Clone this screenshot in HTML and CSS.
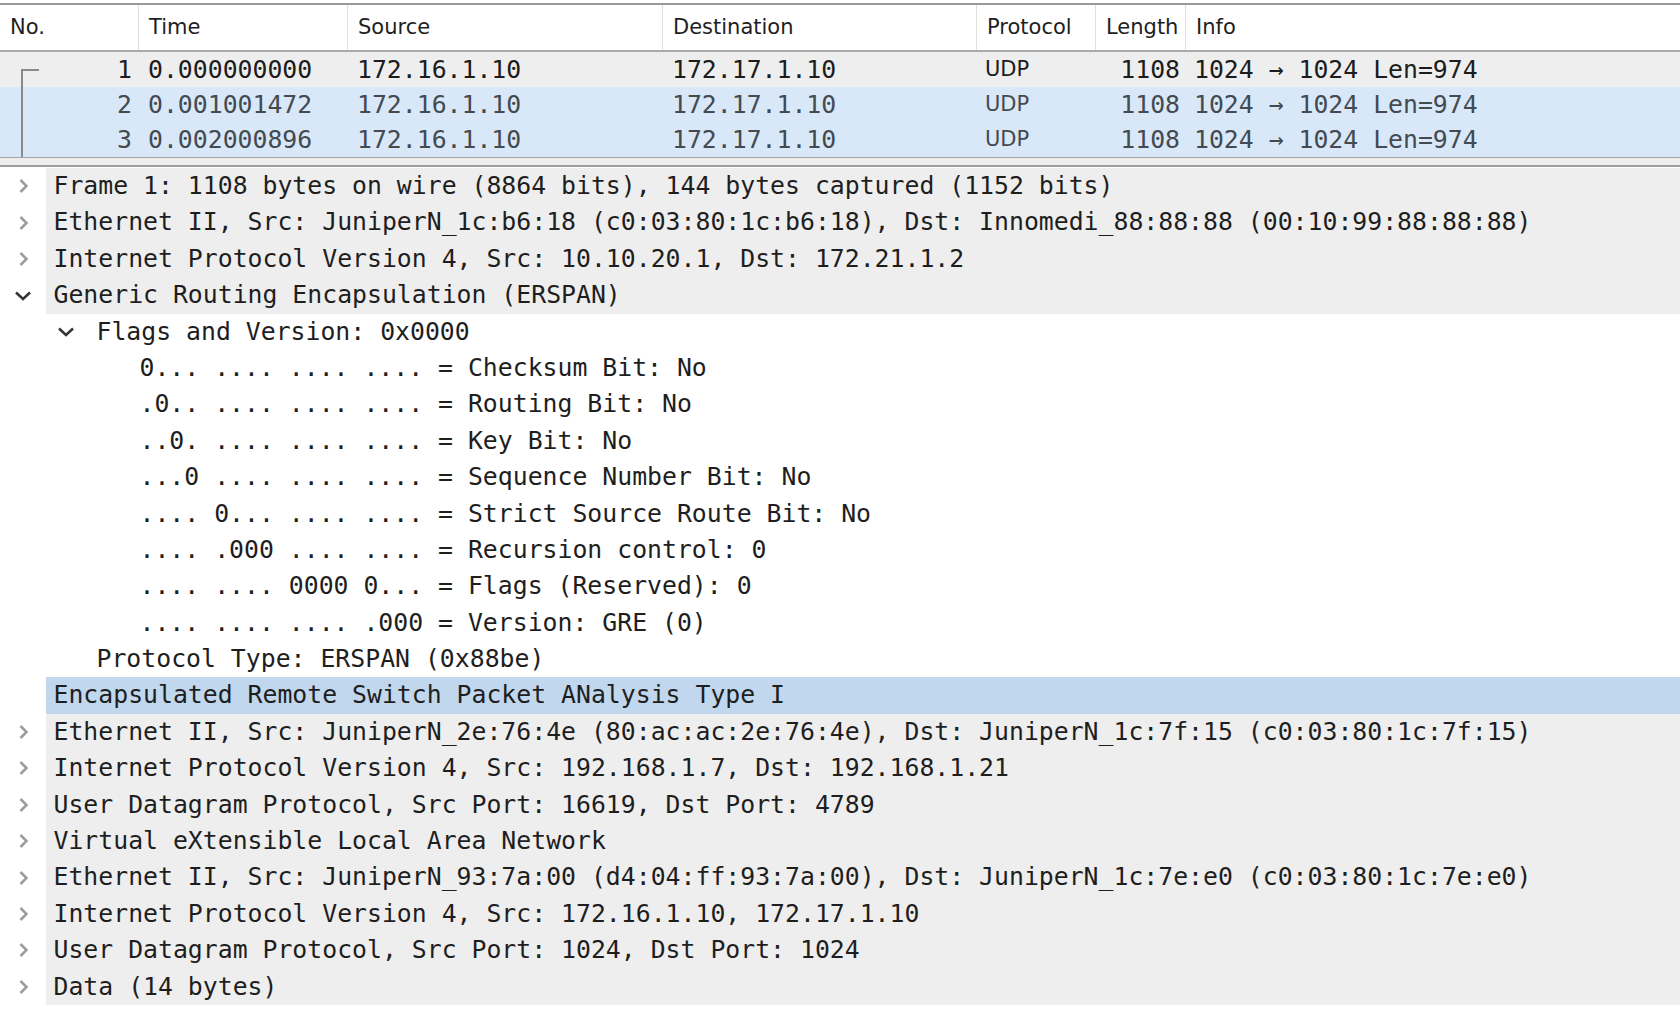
FILE: index.html
```html
<!DOCTYPE html>
<html>
<head>
<meta charset="utf-8">
<link rel="stylesheet" href="styles.css">
</head>
<body>
<div class="app">
  <div class="plist">
    <div class="phead">
      <div class="hc">No.</div>
      <div class="hc">Time</div>
      <div class="hc">Source</div>
      <div class="hc">Destination</div>
      <div class="hc">Protocol</div>
      <div class="hc">Length</div>
      <div class="hc last">Info</div>
    </div>
    <div class="prow first">
      <div class="pc num rel rel-start">1</div>
      <div class="pc mono">0.000000000</div>
      <div class="pc mono">172.16.1.10</div>
      <div class="pc mono">172.17.1.10</div>
      <div class="pc sans">UDP</div>
      <div class="pc mono len">1108</div>
      <div class="pc mono info">1024 → 1024 Len=974</div>
    </div>
    <div class="prow sel">
      <div class="pc num rel rel-mid">2</div>
      <div class="pc mono">0.001001472</div>
      <div class="pc mono">172.16.1.10</div>
      <div class="pc mono">172.17.1.10</div>
      <div class="pc sans">UDP</div>
      <div class="pc mono len">1108</div>
      <div class="pc mono info">1024 → 1024 Len=974</div>
    </div>
    <div class="prow sel">
      <div class="pc num rel rel-mid">3</div>
      <div class="pc mono">0.002000896</div>
      <div class="pc mono">172.16.1.10</div>
      <div class="pc mono">172.17.1.10</div>
      <div class="pc sans">UDP</div>
      <div class="pc mono len">1108</div>
      <div class="pc mono info">1024 → 1024 Len=974</div>
    </div>
  </div>

  <div class="splitter"></div>

  <div class="tree">
    <div class="node shaded"><span class="tw"><svg class="chev-r" width="11" height="16" viewBox="0 0 11 16"><polyline points="2.5,2 8.5,8 2.5,14"/></svg></span><span class="lbl">Frame 1: 1108 bytes on wire (8864 bits), 144 bytes captured (1152 bits)</span></div>
    <div class="node shaded"><span class="tw"><svg class="chev-r" width="11" height="16" viewBox="0 0 11 16"><polyline points="2.5,2 8.5,8 2.5,14"/></svg></span><span class="lbl">Ethernet II, Src: JuniperN_1c:b6:18 (c0:03:80:1c:b6:18), Dst: Innomedi_88:88:88 (00:10:99:88:88:88)</span></div>
    <div class="node shaded"><span class="tw"><svg class="chev-r" width="11" height="16" viewBox="0 0 11 16"><polyline points="2.5,2 8.5,8 2.5,14"/></svg></span><span class="lbl">Internet Protocol Version 4, Src: 10.10.20.1, Dst: 172.21.1.2</span></div>
    <div class="node shaded"><span class="tw"><svg class="chev-d" width="18" height="11" viewBox="0 0 18 11"><polyline points="2,2.5 9,9 16,2.5"/></svg></span><span class="lbl">Generic Routing Encapsulation (ERSPAN)</span></div>
    <div class="node lv1"><span class="tw"><svg class="chev-d" width="18" height="11" viewBox="0 0 18 11"><polyline points="2,2.5 9,9 16,2.5"/></svg></span><span class="lbl">Flags and Version: 0x0000</span></div>
    <div class="node lv2"><span class="tw"></span><span class="lbl">0... .... .... .... = Checksum Bit: No</span></div>
    <div class="node lv2"><span class="tw"></span><span class="lbl">.0.. .... .... .... = Routing Bit: No</span></div>
    <div class="node lv2"><span class="tw"></span><span class="lbl">..0. .... .... .... = Key Bit: No</span></div>
    <div class="node lv2"><span class="tw"></span><span class="lbl">...0 .... .... .... = Sequence Number Bit: No</span></div>
    <div class="node lv2"><span class="tw"></span><span class="lbl">.... 0... .... .... = Strict Source Route Bit: No</span></div>
    <div class="node lv2"><span class="tw"></span><span class="lbl">.... .000 .... .... = Recursion control: 0</span></div>
    <div class="node lv2"><span class="tw"></span><span class="lbl">.... .... 0000 0... = Flags (Reserved): 0</span></div>
    <div class="node lv2"><span class="tw"></span><span class="lbl">.... .... .... .000 = Version: GRE (0)</span></div>
    <div class="node lv1"><span class="tw"></span><span class="lbl">Protocol Type: ERSPAN (0x88be)</span></div>
    <div class="node picked"><span class="tw"></span><span class="lbl">Encapsulated Remote Switch Packet ANalysis Type I</span></div>
    <div class="node shaded"><span class="tw"><svg class="chev-r" width="11" height="16" viewBox="0 0 11 16"><polyline points="2.5,2 8.5,8 2.5,14"/></svg></span><span class="lbl">Ethernet II, Src: JuniperN_2e:76:4e (80:ac:ac:2e:76:4e), Dst: JuniperN_1c:7f:15 (c0:03:80:1c:7f:15)</span></div>
    <div class="node shaded"><span class="tw"><svg class="chev-r" width="11" height="16" viewBox="0 0 11 16"><polyline points="2.5,2 8.5,8 2.5,14"/></svg></span><span class="lbl">Internet Protocol Version 4, Src: 192.168.1.7, Dst: 192.168.1.21</span></div>
    <div class="node shaded"><span class="tw"><svg class="chev-r" width="11" height="16" viewBox="0 0 11 16"><polyline points="2.5,2 8.5,8 2.5,14"/></svg></span><span class="lbl">User Datagram Protocol, Src Port: 16619, Dst Port: 4789</span></div>
    <div class="node shaded"><span class="tw"><svg class="chev-r" width="11" height="16" viewBox="0 0 11 16"><polyline points="2.5,2 8.5,8 2.5,14"/></svg></span><span class="lbl">Virtual eXtensible Local Area Network</span></div>
    <div class="node shaded"><span class="tw"><svg class="chev-r" width="11" height="16" viewBox="0 0 11 16"><polyline points="2.5,2 8.5,8 2.5,14"/></svg></span><span class="lbl">Ethernet II, Src: JuniperN_93:7a:00 (d4:04:ff:93:7a:00), Dst: JuniperN_1c:7e:e0 (c0:03:80:1c:7e:e0)</span></div>
    <div class="node shaded"><span class="tw"><svg class="chev-r" width="11" height="16" viewBox="0 0 11 16"><polyline points="2.5,2 8.5,8 2.5,14"/></svg></span><span class="lbl">Internet Protocol Version 4, Src: 172.16.1.10, 172.17.1.10</span></div>
    <div class="node shaded"><span class="tw"><svg class="chev-r" width="11" height="16" viewBox="0 0 11 16"><polyline points="2.5,2 8.5,8 2.5,14"/></svg></span><span class="lbl">User Datagram Protocol, Src Port: 1024, Dst Port: 1024</span></div>
    <div class="node shaded"><span class="tw"><svg class="chev-r" width="11" height="16" viewBox="0 0 11 16"><polyline points="2.5,2 8.5,8 2.5,14"/></svg></span><span class="lbl">Data (14 bytes)</span></div>
  </div>
</div>
</body>
</html>
```

FILE: styles.css
```css
* { box-sizing: border-box; }

html, body {
  margin: 0;
  padding: 0;
  background: #ffffff;
  width: 1680px;
  height: 1014px;
  overflow: hidden;
}

.app {
  padding-top: 3px;
}

/* ---------- packet list ---------- */
.plist {
  border-top: 2px solid #999999;
}

.phead,
.prow {
  display: grid;
  grid-template-columns: 139px 209px 315px 314px 119px 90px 1fr;
}

.phead {
  height: 47px;
  border-bottom: 2px solid #aaaaaa;
  background: #ffffff;
}

.hc {
  font-family: "DejaVu Sans", "Liberation Sans", sans-serif;
  font-size: 21px;
  color: #1e1e1e;
  line-height: 44px;
  padding-left: 10px;
  border-right: 1.5px solid #dedede;
  white-space: nowrap;
  overflow: hidden;
}

.hc.last { border-right: none; }

.prow {
  height: 35px;
  line-height: 35px;
  color: #2e2e2e;
}

.prow.first { background: #eeeeee; color: #1c1c1c; }
.prow.sel { background: #d8e8f8; color: #444a50; }

.pc {
  padding-left: 9px;
  white-space: pre;
  overflow: hidden;
}

.mono {
  font-family: "DejaVu Sans Mono", "Liberation Mono", monospace;
  font-size: 24.8px;
}

.sans {
  font-family: "DejaVu Sans", "Liberation Sans", sans-serif;
  font-size: 21px;
  padding-left: 8px;
}

.num {
  font-family: "DejaVu Sans Mono", "Liberation Mono", monospace;
  font-size: 24.8px;
  text-align: right;
  padding-left: 0;
  padding-right: 7px;
}

.len {
  text-align: right;
  padding-left: 0;
  padding-right: 6px;
}

.info { padding-left: 8px; }

/* related-packet indicator in the No. column */
.rel { position: relative; }

.rel-start::before {
  content: "";
  position: absolute;
  left: 21px;
  top: 17px;
  width: 16px;
  height: 18px;
  border-top: 2px solid #8a8a8a;
  border-left: 2px solid #8a8a8a;
}

.rel-mid::before {
  content: "";
  position: absolute;
  left: 21px;
  top: 0;
  bottom: 0;
  border-left: 2px solid #8a8a8a;
}

.splitter {
  height: 10px;
  border-top: 1.5px solid #a3a3a3;
  border-bottom: 2px solid #9d9d9d;
  background: #eeeeee;
}

/* ---------- details tree ---------- */
.tree {
  padding-top: 1px;
  font-family: "DejaVu Sans Mono", "Liberation Mono", monospace;
  font-size: 24.8px;
  color: #1e1e1e;
}

.node {
  display: flex;
  height: 36.4px;
}

.node.lv1 { padding-left: 43px; }
.node.lv2 { padding-left: 86px; }

.tw {
  flex: 0 0 46px;
  display: flex;
  align-items: center;
  justify-content: center;
}

.lbl {
  flex: 1;
  padding-left: 7.5px;
  line-height: 36.4px;
  white-space: pre;
  overflow: hidden;
}

.shaded .lbl { background: #eeeeee; }
.picked .lbl { background: #c1d7ed; }

.chev-r polyline {
  fill: none;
  stroke: #9c9c9c;
  stroke-width: 2.5;
}

.chev-d polyline {
  fill: none;
  stroke: #353535;
  stroke-width: 2.6;
}
```
